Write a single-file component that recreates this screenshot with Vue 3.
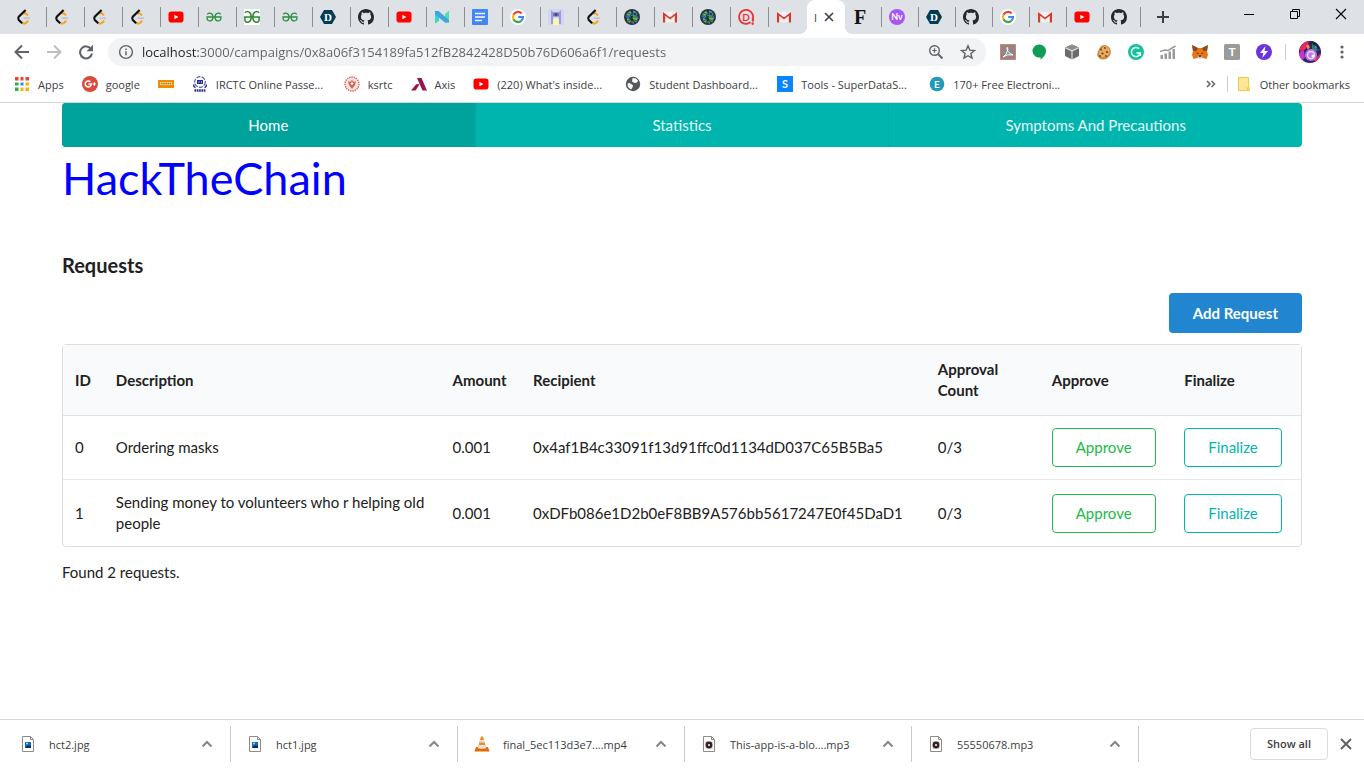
<template>
  <div class="browser">
    <svg class="sprite" aria-hidden="true">
      <symbol id="leetcode" viewBox="0 0 16 16">
        <path d="M7 4.800q2-1.500 3.800.4l1.200 1.200M6.200 13.800q2 1.600 4 0l2-2" fill="none" stroke="#f9a11b" stroke-width="2" />
        <path d="M9.600 1 2.800 7.700q-1.300 1.700 0 3.300l3.400 3.200" fill="none" stroke="#111" stroke-width="2.200" />
        <path d="M7.500 9.200h6.500" stroke="#c4c4c4" stroke-width="1.800" />
      </symbol>
      <symbol id="youtube" viewBox="0 0 16 16">
        <rect x="0.500" y="2.500" width="15" height="11" rx="2.800" fill="#f00" />
        <path d="M6.400 5.700v4.600l4-2.300z" fill="#fff" />
      </symbol>
      <symbol id="gfg" viewBox="0 0 16 16">
        <path d="M1.300 5.300C2.600 3.700 7 3.300 7 8s-4.400 4.500-5.700 2.700L1 8h14l-.3 2.700C13.400 12.500 9 12.700 9 8s4.400-4.300 5.700-2.700" fill="none" stroke="#2f8d46" stroke-width="1.300" />
      </symbol>
      <symbol id="gfg-box" viewBox="0 0 16 16">
        <path d="M0 0h16v16H0z" fill="#fff" />
        <path d="M1 3.800C2.600 1.600 7.200 2.200 7.200 8S2.400 14.400 1 11.800L.8 8h14.400l-.2 3.800C13.600 14.400 8.800 13.800 8.800 8s4.600-6.400 6.200-4.200" fill="none" stroke="#2e8b2e" stroke-width="1.500" />
      </symbol>
      <symbol id="devfolio" viewBox="0 0 16 16">
        <path d="M4 1h8l4 7-4 7H4L0 8z" fill="#053c53" />
      </symbol>
      <symbol id="github" viewBox="0 0 16 16">
        <path fill="#24292e" d="M8 0C3.580 0 0 3.580 0 8c0 3.540 2.290 6.530 5.470 7.590.4.070.55-.17.55-.38 0-.19-.01-.82-.01-1.490-2.010.37-2.530-.49-2.690-.94-.09-.23-.48-.94-.82-1.130-.28-.15-.68-.52-.01-.53.63-.01 1.080.58 1.230.82.72 1.210 1.870.87 2.330.66.07-.52.28-.87.51-1.070-1.780-.2-3.640-.89-3.640-3.950 0-.87.31-1.590.82-2.150-.08-.2-.36-1.020.08-2.120 0 0 .67-.21 2.200.82.64-.18 1.320-.27 2-.27s1.360.09 2 .27c1.530-1.040 2.200-.82 2.200-.82.44 1.100.16 1.920.08 2.120.51.56.82 1.270.82 2.150 0 3.070-1.870 3.750-3.650 3.950.29.25.54.73.54 1.480 0 1.070-.01 1.930-.01 2.200 0 .21.15.46.55.38A8.010 8.010 0 0 0 16 8c0-4.420-3.580-8-8-8z" />
      </symbol>
      <symbol id="nx" viewBox="0 0 16 16">
        <path d="M1 2l4 3v7l-4 2.500z" fill="#35d8c0" />
        <path d="M11 5l4-3.500V13.500h-4z" fill="#4be3a4" />
        <path d="M1 2h3.500L15 11v2.500h-4L1 5.500z" fill="#3fa5e0" />
      </symbol>
      <symbol id="docs" viewBox="0 0 16 16">
        <rect width="16" height="16" rx="1" fill="#4285f4" />
        <path d="M3 4.500h10M3 8h10M3 11.500h7" stroke="#fff" stroke-width="1.600" />
      </symbol>
      <symbol id="google" viewBox="0 0 16 16">
        <circle cx="8" cy="8" r="8" fill="#fff" />
        <g fill="none" stroke-width="2.200">
          <path d="M11.600 4.500A5 5 0 0 0 3.500 5.800" stroke="#ea4335" />
          <path d="M3.500 5.800A5 5 0 0 0 3.500 10.200" stroke="#fbbc05" />
          <path d="M3.500 10.200A5 5 0 0 0 11.400 11.700" stroke="#34a853" />
          <path d="M11.400 11.700A5 5 0 0 0 13 8H8.200" stroke="#4285f4" />
        </g>
      </symbol>
      <symbol id="tower" viewBox="0 0 16 16">
        <path d="M0 0h16v16H0z" fill="#d4d5f5" />
        <path d="M3 1l2 2h6l2-2v14h-2V8H5v7H3z" fill="#9a9ddb" />
        <path d="M5 4h6v3H5z" fill="#7376a6" />
        <circle cx="8" cy="5.500" r="1.200" fill="#3c3f6b" />
        <path d="M5 16v-5q3-4 6 0v5z" fill="#fdf6b0" />
      </symbol>
      <symbol id="earth" viewBox="0 0 16 16">
        <circle cx="8" cy="8" r="8" fill="#2a3540" />
        <path d="M2 5l4-3 2 2-3 3zM8 8l3-2 3 3-2 4-2-1zM3 9l4 2-1 3-3-2zM11 3l3 2-2 1zM7 13l2-1 1 3z" fill="#63b84c" />
        <path d="M9 1.500l3 1 1 2-4-1zM1 7l4-1 2 2-3 2zM7 12l3 1-2 2zM6 5l4-1v3H7zM12 6l3 2-2 2zM12 12l2-1-2 3z" fill="#3a8fd6" />
        <path d="M1 8h14M8 1v14M2.500 4q5.500 3 11 0M2.500 12q5.500-3 11 0" fill="none" stroke="#1b262c" stroke-width=".6" />
      </symbol>
      <symbol id="gmail" viewBox="0 0 16 16">
        <path d="M1.500 2.800h13v10.400h-13z" fill="#f3f1f1" />
        <path d="M1 13.500V3l7 5.600L15 3v10.500h-2.200V6.800L8 10.600 3.200 6.800v6.700z" fill="#d93a2b" />
      </symbol>
      <symbol id="dare" viewBox="0 0 16 16">
        <path d="M12.500 13.300A7 7 0 1 1 15 9" fill="none" stroke="#f0323c" stroke-width="1.800" />
        <path d="M13.800 8.500h2.200v4h-2.200z" fill="#f0323c" />
        <circle cx="14.700" cy="14.600" r="1.300" fill="#f0323c" />
      </symbol>
      <symbol id="nv" viewBox="0 0 16 16">
        <circle cx="8" cy="8" r="8" fill="#a655f7" />
      </symbol>

      <symbol id="apps" viewBox="0 0 16 16">
        <path d="M1 1h4v4H1zM6 1h4v4H6zM11 1h4v4h-4z" fill="#e94335" />
        <path d="M1 6h4v4H1zM1 11h4v4H1z" fill="#34a853" />
        <path d="M6 6h4v4H6z" fill="#2b8cf4" />
        <path d="M11 6h4v4h-4zM6 11h4v4H6zM11 11h4v4h-4z" fill="#f5b400" />
        <path d="M5.500 0v16M10.500 0v16M0 5.500h16M0 10.500h16" stroke="#fff" stroke-width="2" />
      </symbol>
      <symbol id="gplus" viewBox="0 0 16 16">
        <circle cx="8" cy="8" r="8" fill="#d94b3d" />
        <path d="M8.400 5.900A3 3 0 1 0 9.200 8H6.400" fill="none" stroke="#fff" stroke-width="1.500" />
        <path d="M10.500 8h3.600M12.300 6.200v3.600" stroke="#fff" stroke-width="1.200" />
      </symbol>
      <symbol id="ticket" viewBox="0 0 16 16">
        <path d="M0 4h16v8H0z" fill="#f08c00" />
        <path d="M2 6h12v3H2z" fill="#fbd9a0" />
        <path d="M3 7.500h10" stroke="#b06a10" stroke-width="1.500" stroke-dasharray="1.500 .7" />
      </symbol>
      <symbol id="irctc" viewBox="0 0 16 16">
        <circle cx="8" cy="6" r="5.300" fill="#fff" stroke="#5a5eb5" stroke-width="1.200" stroke-dasharray="4 1.200" />
        <path d="M5 4h6v4H5z" fill="#2b2f95" />
        <path d="M2 8.500q-1 2 1.500 3M14 8.500q1 2-1.500 3" fill="none" stroke="#2b2f95" stroke-width="1.500" />
        <path d="M6.500 6h1M9 6h1" stroke="#fff" />
        <path d="M2.500 14.500h11" stroke="#2b2f95" stroke-width="2.500" stroke-dasharray="1.700 .6" />
      </symbol>
      <symbol id="ksrtc" viewBox="0 0 16 16">
        <circle cx="8" cy="8" r="7" fill="#fbe5e3" stroke="#d9605a" stroke-width="1.400" stroke-dasharray="1.400 .9" />
        <path d="M4 5l2 1 2-2 2 2 2-1-1 4-3 4-3-4z" fill="#d9605a" />
        <circle cx="8" cy="7.500" r="1.200" fill="#fff" />
      </symbol>
      <symbol id="axis" viewBox="0 0 16 16">
        <path d="M6 2h4.500l5.500 12.500h-4.500z" fill="#97144d" />
        <path d="M0 14.500 5 8.500q2-1 3.500 0L4.500 14.500z" fill="#97144d" />
      </symbol>
      <symbol id="globe" viewBox="0 0 16 16">
        <circle cx="8" cy="8" r="7.200" fill="#55595e" />
        <path d="M2.500 7.500q2-1 3.500.5t2 1l-.5 2.500L6 13.500 3 11z" fill="#fff" />
        <path d="M7.500 2.200h3l2.500 2.300-1 2-2.500.5L7 5.500z" fill="#fff" />
      </symbol>
      <symbol id="letter-s" viewBox="0 0 16 16">
        <path d="M0 0h16v16H0z" fill="#0a84ff" />
      </symbol>
      <symbol id="letter-e" viewBox="0 0 16 16">
        <circle cx="8" cy="8" r="7.300" fill="#1f9bb8" />
      </symbol>
      <symbol id="folder" viewBox="0 0 16 16">
        <path d="M2.500 1.500h10v9l1 4h-11z" fill="#ffe694" stroke="#edc94c" />
        <path d="M11.500 14.500q-1-3.500 1.500-4v4z" fill="#ffe694" stroke="#edc94c" />
      </symbol>

      <symbol id="acrobat" viewBox="0 0 16 16">
        <path d="M.5.5h15v15H.500z" fill="#8d8787" stroke="#e07c6c" />
        <path d="M3 13q4-2 4.800-7.500.2-2.500-.8-2 -.5 4.500 6 7.500-5.500-1.500-10 2" fill="none" stroke="#fff" stroke-width="1" />
      </symbol>
      <symbol id="hangouts" viewBox="0 0 16 16">
        <path d="M7.500.5a6.500 6.500 0 0 1 6.500 6.500c0 4-3 6.500-5.500 8.500v-2.200A6.500 6.500 0 1 1 7.500.5z" fill="#0f9d58" />
      </symbol>
      <symbol id="cube" viewBox="0 0 16 16">
        <path d="M8 .5l7 3v8.500L8 15.500l-7-3.500V3.500z" fill="#6b6b6b" />
        <path d="M8 .5l7 3L8 7 1 3.500z" fill="#8e8e8e" />
        <path d="M1.500 3.800 8 7l6.500-3.200M8 7v8" fill="none" stroke="#e2e2e2" stroke-width="1.200" />
      </symbol>
      <symbol id="cookie" viewBox="0 0 16 16">
        <path d="M8 1q4 0 6 3.500 2 4-.5 7.500T7 15.500 1 11l1-4 3-5z" fill="#d08a3c" />
        <path d="M8 2q5 0 5.500 5T8 13 3 8z" fill="#e6ac62" />
        <g fill="#70401c"><circle cx="5" cy="5.500" r="1" /><circle cx="9" cy="4" r=".9" /><circle cx="11" cy="8" r="1.100" /><circle cx="6.500" cy="9.500" r="1.100" /><circle cx="4" cy="12" r=".9" /><circle cx="10" cy="12" r=".9" /></g>
      </symbol>
      <symbol id="grammarly" viewBox="0 0 16 16">
        <circle cx="8" cy="8" r="8" fill="#15c39a" />
        <path d="M11 4.800A4.500 4.500 0 1 0 12.300 9H8.500M12.400 9v3" fill="none" stroke="#fff" stroke-width="1.500" />
      </symbol>
      <symbol id="stats" viewBox="0 0 16 16">
        <path d="M.5 11h2.500v4H.500zM4.500 9.500h2.500V15H4.500zM8.500 7.500H11V15H8.500zM12.500 5H15V15h-2.500z" fill="#9a9a9a" />
        <path d="M0 7.500l5-1.500 3 .5L15.500 2" fill="none" stroke="#9a9a9a" stroke-width="1.500" />
      </symbol>
      <symbol id="metamask" viewBox="0 0 16 16">
        <path d="M0 1l6 3h4l6-3-1 6 1 4-1.500 4-4-1H5.500l-4 1L0 11l1-4z" fill="#e4761b" />
        <path d="M0 1l6 3-1.500 3L1 7zM16 1l-6 3 1.500 3L15 7z" fill="#8f4a1e" />
        <path d="M6 12h4l.5 2.500h-5z" fill="#d7c1b3" />
        <path d="M4 8.500l2.500.5v1.200zM12 8.500 9.500 9v1.200zM6.800 11.500h2.400v1.300H6.800z" fill="#2b2622" />
      </symbol>
      <symbol id="type-t" viewBox="0 0 16 16">
        <rect width="16" height="16" rx="1.500" fill="#9b9b9b" />
      </symbol>
      <symbol id="bolt" viewBox="0 0 16 16">
        <circle cx="8" cy="8" r="8" fill="#6a35e0" />
        <path d="M9.500 2 4 9h3.300l-1 5L12 7H8.500z" fill="#fff" />
      </symbol>
      <symbol id="avatar" viewBox="0 0 22 22">
        <circle cx="11" cy="11" r="11" fill="#35206b" />
        <path d="M1 7q3-6 9-7l-3 8-6 3z" fill="#e8265f" />
        <path d="M12 0q6 1 8 6l-6 1z" fill="#142a3c" />
        <path d="M13 2l4 6 4 1-8 2z" fill="#2f7f63" />
        <path d="M0 12l5-3 1 8-3 2q-3-3-3-7z" fill="#c535c9" />
        <path d="M15 19l6-6q1 4-5 8z" fill="#e23b48" />
        <path d="M9 3l2 3-2 3-2-4z" fill="#f08a3a" />
        <path d="M15 4l3 2-1 3z" fill="#36a0d8" />
        <circle cx="12" cy="14" r="6" fill="#b878f0" />
        <circle cx="12" cy="14" r="3.500" fill="none" stroke="#efd8ff" stroke-width="1.300" />
        <circle cx="14" cy="15" r="1.500" fill="#fff" />
      </symbol>

      <symbol id="back" viewBox="0 0 16 16">
        <path d="M15 8H2M8 1.500 1.500 8 8 14.500" fill="none" stroke="currentColor" stroke-width="2" />
      </symbol>
      <symbol id="forward" viewBox="0 0 16 16">
        <path d="M1 8h13M8 1.500 14.500 8 8 14.500" fill="none" stroke="currentColor" stroke-width="2" />
      </symbol>
      <symbol id="reload" viewBox="0 0 16 16">
        <path d="M13.200 5.200A6 6 0 1 0 14 9.500" fill="none" stroke="currentColor" stroke-width="2" />
        <path d="M15 .8v6.500H8.500z" fill="currentColor" />
      </symbol>
      <symbol id="info" viewBox="0 0 16 16">
        <circle cx="8" cy="8" r="6.400" fill="none" stroke="currentColor" stroke-width="1.400" />
        <path d="M8 7.200v4M8 4.500v1.500" stroke="currentColor" stroke-width="1.500" />
      </symbol>
      <symbol id="zoom" viewBox="0 0 16 16">
        <circle cx="6.500" cy="6.500" r="4.800" fill="none" stroke="currentColor" stroke-width="1.400" />
        <path d="M10 10l4.500 4.500" stroke="currentColor" stroke-width="2" />
        <path d="M4.300 6.500h4.400M6.500 4.300v4.400" stroke="currentColor" stroke-width="1.200" />
      </symbol>
      <symbol id="star" viewBox="0 0 16 16">
        <path d="M8 1.800l1.800 4.300 4.700.4-3.600 3 1.100 4.600L8 11.700l-4 2.400 1.100-4.600-3.600-3 4.700-.4z" fill="none" stroke="currentColor" stroke-width="1.400" />
      </symbol>
      <symbol id="dots" viewBox="0 0 16 16">
        <g fill="currentColor"><circle cx="8" cy="3" r="1.600" /><circle cx="8" cy="8" r="1.600" /><circle cx="8" cy="13" r="1.600" /></g>
      </symbol>
      <symbol id="plus" viewBox="0 0 16 16">
        <path d="M8 2v12M2 8h12" stroke="currentColor" stroke-width="2" />
      </symbol>
      <symbol id="cross" viewBox="0 0 16 16">
        <path d="M4 4l8 8M12 4l-8 8" stroke="currentColor" stroke-width="1.600" />
      </symbol>
      <symbol id="cross-large" viewBox="0 0 16 16">
        <path d="M3 3l10 10M13 3 3 13" stroke="currentColor" stroke-width="2" />
      </symbol>
      <symbol id="minimize" viewBox="0 0 16 16">
        <path d="M3 8.500h10" stroke="#000" />
      </symbol>
      <symbol id="restore" viewBox="0 0 16 16">
        <path d="M3.500 5.500h7v7h-7zM5.500 5.500v-2h7v7h-2" fill="none" stroke="#000" />
      </symbol>
      <symbol id="close" viewBox="0 0 16 16">
        <path d="M3 3l10 10M13 3 3 13" stroke="#000" stroke-width="1.100" />
      </symbol>
      <symbol id="more" viewBox="0 0 16 16">
        <path d="M4 5l3 3-3 3M8.500 5l3 3-3 3" fill="none" stroke="currentColor" stroke-width="1.500" />
      </symbol>
      <symbol id="chevron" viewBox="0 0 16 16">
        <path d="M3.500 10.500 8 6l4.500 4.500" fill="none" stroke="#80868b" stroke-width="2" />
      </symbol>
      <symbol id="file-image" viewBox="0 0 16 16">
        <path d="M2.500.5h8l3 3v12h-11zM10.500.5v3h3" fill="#fff" stroke="#8c8c8c" />
        <path d="M5 6h6v6H5z" fill="#1668b8" />
        <path d="M5 12l3-3 1.500 1L11 9v3z" fill="#0c2f63" />
        <circle cx="7" cy="7.500" r="1" fill="#9fe0ff" />
      </symbol>
      <symbol id="file-audio" viewBox="0 0 16 16">
        <path d="M2.500.5h8l3 3v12h-11zM10.500.5v3h3" fill="#fff" stroke="#8c8c8c" />
        <path d="M4.500 5.500h7v7h-7z" fill="#f0a884" />
        <circle cx="8" cy="9" r="3.400" fill="#2d2335" />
        <circle cx="8" cy="9" r="1" fill="#fff" />
      </symbol>
      <symbol id="vlc" viewBox="0 0 16 16">
        <path d="M2 11h12l1.500 4.500H.5z" fill="#e66a00" />
        <path d="M7 .5h2L12.500 13h-9z" fill="#f08a1d" />
        <path d="M6 4h4l.8 2.600H5.200zM4.600 9h6.800l.8 3q-4.200 1.500-8.400 0z" fill="#dfe3e6" />
      </symbol>
    </svg>

    <header class="chrome">
      <div class="tab-strip">
        <div class="tabs">
          <button v-for="(tab, i) in leftTabs" :key="'l' + i" class="tab" :aria-label="tab">
            <AppIcon :name="tab" />
            <span v-if="i < leftTabs.length - 1" class="tab-line"></span>
          </button>
          <div class="tab tab-active">
            <span class="tab-title">I</span>
            <button class="tab-close" aria-label="Close tab">
              <AppIcon name="cross" />
            </button>
          </div>
          <button v-for="(tab, i) in rightTabs" :key="'r' + i" class="tab tab-narrow" :aria-label="tab">
            <AppIcon :name="tab" />
            <span class="tab-line"></span>
          </button>
          <button class="new-tab" aria-label="New tab">
            <AppIcon name="plus" />
          </button>
        </div>
        <div class="window-controls">
          <button v-for="control in windowControls" :key="control" class="window-btn" :aria-label="control">
            <AppIcon :name="control" />
          </button>
        </div>
      </div>

      <div class="toolbar">
        <button class="icon-btn" aria-label="Back"><AppIcon name="back" /></button>
        <button class="icon-btn icon-btn-off" aria-label="Forward"><AppIcon name="forward" /></button>
        <button class="icon-btn" aria-label="Reload"><AppIcon name="reload" /></button>
        <div class="omnibox">
          <AppIcon name="info" />
          <input v-model="address" class="address" type="text" aria-label="Address" spellcheck="false" />
          <button class="icon-btn" aria-label="Zoom"><AppIcon name="zoom" /></button>
          <button class="icon-btn" aria-label="Bookmark"><AppIcon name="star" /></button>
        </div>
        <div class="toolbar-end">
          <div class="extensions">
            <button v-for="ext in extensions" :key="ext" class="icon-btn" :aria-label="ext">
              <AppIcon :name="ext" />
            </button>
          </div>
          <span class="toolbar-line"></span>
          <button class="icon-btn" aria-label="Profile"><svg class="avatar"><use href="#avatar" /></svg></button>
          <button class="icon-btn" aria-label="Menu"><AppIcon name="dots" /></button>
        </div>
      </div>

      <nav class="bookmarks">
        <a v-for="mark in bookmarks" :key="mark.icon" href="#" class="bookmark" :aria-label="mark.label || mark.icon">
          <AppIcon :name="mark.icon" />
          <span v-if="mark.label" :class="{ 'bookmark-long': mark.label.endsWith('...') }">{{ mark.label }}</span>
        </a>
        <div class="bookmarks-end">
          <button class="icon-btn" aria-label="More bookmarks"><AppIcon name="more" /></button>
          <span class="toolbar-line"></span>
          <a href="#" class="bookmark">
            <AppIcon name="folder" />
            <span>Other bookmarks</span>
          </a>
        </div>
      </nav>
    </header>

    <main class="page">
      <nav class="menu">
        <a v-for="item in menu" :key="item" href="#" class="menu-item" :class="{ active: item === activeItem }"
          @click.prevent="activeItem = item">{{ item }}</a>
      </nav>

      <h1 class="brand"><a href="#">HackTheChain</a></h1>
      <h3 class="title">Requests</h3>

      <div class="actions">
        <button class="btn btn-primary">Add Request</button>
      </div>

      <table class="requests">
        <colgroup>
          <col class="col-id" />
          <col class="col-description" />
          <col class="col-amount" />
          <col class="col-recipient" />
          <col class="col-count" />
          <col class="col-approve" />
          <col class="col-finalize" />
        </colgroup>
        <thead>
          <tr>
            <th v-for="head in heads" :key="head">{{ head }}</th>
          </tr>
        </thead>
        <tbody>
          <tr v-for="request in requests" :key="request.id">
            <td>{{ request.id }}</td>
            <td>{{ request.description }}</td>
            <td>{{ request.amount }}</td>
            <td>{{ request.recipient }}</td>
            <td>{{ request.approvals }}/{{ approversCount }}</td>
            <td><button class="btn btn-approve">Approve</button></td>
            <td><button class="btn btn-finalize">Finalize</button></td>
          </tr>
        </tbody>
      </table>

      <p class="found">Found {{ requests.length }} requests.</p>
    </main>

    <footer class="downloads">
      <div v-for="file in downloads" :key="file.name" class="download">
        <AppIcon :name="file.icon" />
        <span class="download-name">{{ file.name }}</span>
        <button class="icon-btn" :aria-label="'Options for ' + file.name">
          <AppIcon name="chevron" />
        </button>
      </div>
      <div class="downloads-end">
        <button class="show-all">Show all</button>
        <button class="icon-btn" aria-label="Close downloads bar">
          <AppIcon name="cross-large" />
        </button>
      </div>
    </footer>
  </div>
</template>

<script setup>
import { h, ref } from 'vue'

// letters that sit on top of an icon's shape
const sans = 'Lato, sans-serif'
const serif = 'Liberation Serif, serif'
const letters = {
  devfolio: { text: 'D', size: 11, y: 12, family: serif, fill: '#fff' },
  dare: { text: 'D', size: 10, y: 12, family: sans, fill: '#f0323c' },
  'letter-f': { text: 'F', size: 20, y: 15, family: serif, fill: '#111' },
  nv: { text: 'Nv', size: 9, y: 11, family: sans, fill: '#fff' },
  'letter-s': { text: 'S', size: 11, y: 12, family: sans, fill: '#fff' },
  'letter-e': { text: 'E', size: 10, y: 12, family: sans, fill: '#fff' },
  'type-t': { text: 'T', size: 12, y: 12, family: sans, fill: '#fff' }
}

const AppIcon = ({ name }) => {
  const letter = letters[name]
  return h('svg', { class: 'icon', viewBox: '0 0 16 16' }, [
    h('use', { href: '#' + name }),
    letter && h('text', {
      x: 8,
      y: letter.y,
      fill: letter.fill,
      'text-anchor': 'middle',
      'font-family': letter.family,
      'font-size': letter.size,
      'font-weight': 700
    }, letter.text)
  ])
}
AppIcon.props = ['name']

const leftTabs = [
  'leetcode', 'leetcode', 'leetcode', 'leetcode', 'youtube', 'gfg', 'gfg-box',
  'gfg', 'devfolio', 'github', 'youtube', 'nx', 'docs', 'google', 'tower',
  'leetcode', 'earth', 'gmail', 'earth', 'dare', 'gmail'
]
const rightTabs = ['letter-f', 'nv', 'devfolio', 'github', 'google', 'gmail', 'youtube', 'github']
const windowControls = ['minimize', 'restore', 'close']
const extensions = ['acrobat', 'hangouts', 'cube', 'cookie', 'grammarly', 'stats', 'metamask', 'type-t', 'bolt']

const address = ref('localhost:3000/campaigns/0x8a06f3154189fa512fB2842428D50b76D606a6f1/requests')

const bookmarks = [
  { icon: 'apps', label: 'Apps' },
  { icon: 'gplus', label: 'google' },
  { icon: 'ticket', label: '' },
  { icon: 'irctc', label: 'IRCTC Online Passe...' },
  { icon: 'ksrtc', label: 'ksrtc' },
  { icon: 'axis', label: 'Axis' },
  { icon: 'youtube', label: "(220) What's inside..." },
  { icon: 'globe', label: 'Student Dashboard...' },
  { icon: 'letter-s', label: 'Tools - SuperDataS...' },
  { icon: 'letter-e', label: '170+ Free Electroni...' }
]

const menu = ['Home', 'Statistics', 'Symptoms And Precautions']
const activeItem = ref('Home')

const heads = ['ID', 'Description', 'Amount', 'Recipient', 'Approval Count', 'Approve', 'Finalize']
const approversCount = 3
const requests = [
  {
    id: 0,
    description: 'Ordering masks',
    amount: '0.001',
    recipient: '0x4af1B4c33091f13d91ffc0d1134dD037C65B5Ba5',
    approvals: 0
  },
  {
    id: 1,
    description: 'Sending money to volunteers who r helping old people',
    amount: '0.001',
    recipient: '0xDFb086e1D2b0eF8BB9A576bb5617247E0f45DaD1',
    approvals: 0
  }
]

const downloads = [
  { icon: 'file-image', name: 'hct2.jpg' },
  { icon: 'file-image', name: 'hct1.jpg' },
  { icon: 'vlc', name: 'final_5ec113d3e7....mp4' },
  { icon: 'file-audio', name: 'This-app-is-a-blo....mp3' },
  { icon: 'file-audio', name: '55550678.mp3' }
]
</script>

<style>
body {
  margin: 0;
  background: #fff;
}
</style>

<style scoped>
* {
  box-sizing: border-box;
}

button {
  border: none;
  background: none;
  padding: 0;
  font-family: inherit;
  cursor: pointer;
}

a {
  color: inherit;
  text-decoration: none;
}

.browser {
  display: flex;
  flex-direction: column;
  min-height: 100vh;
  font-family: "Open Sans", "Noto Sans", sans-serif;
  font-size: 11px;
  color: #3c4043;
}

.sprite {
  position: absolute;
  width: 0;
  height: 0;
}

.icon {
  display: block;
  flex: none;
  width: 16px;
  height: 16px;
}

.icon-btn {
  display: flex;
  flex: none;
  color: #5f6368;
}

.icon-btn-off {
  color: #bdbfc2;
}

/* tabs */
.chrome {
  border-bottom: 1px solid #d6d7d9;
}

.tab-strip {
  display: flex;
  justify-content: space-between;
  height: 34px;
  background: #dee1e6;
}

.tabs {
  display: flex;
  padding-left: 9px;
  min-width: 0;
}

.tab {
  display: flex;
  align-items: center;
  justify-content: space-between;
  width: 38px;
  padding-left: 7px;
}

.tab-narrow {
  width: 37px;
}

.tab-line {
  width: 1px;
  height: 20px;
  background: #8b8e93;
}

.tab-active {
  position: relative;
  padding: 0 8px 0 7px;
  background: #fff;
  border-radius: 8px 8px 0 0;
}

.tab-active::before,
.tab-active::after {
  content: "";
  position: absolute;
  bottom: 0;
  width: 8px;
  height: 8px;
}

.tab-active::before {
  right: 100%;
  background: radial-gradient(circle at 0 0, transparent 8px, #fff 8px);
}

.tab-active::after {
  left: 100%;
  background: radial-gradient(circle at 100% 0, transparent 8px, #fff 8px);
}

.tab-close {
  color: #3c4043;
}

.new-tab {
  padding: 0 14px;
  color: #3c4043;
}

.window-controls {
  display: flex;
}

.window-btn {
  display: flex;
  align-items: center;
  justify-content: center;
  width: 46px;
  height: 28px;
}

/* toolbar */
.toolbar {
  display: flex;
  align-items: center;
  gap: 16px;
  height: 36px;
  padding: 0 14px;
}

.omnibox {
  display: flex;
  flex: 1;
  align-items: center;
  gap: 16px;
  height: 28px;
  margin: 0 -2px;
  padding: 0 10px;
  border-radius: 14px;
  background: #f1f3f4;
  color: #5f6368;
}

.address {
  flex: 1;
  min-width: 0;
  margin-left: -8px;
  padding: 0;
  border: none;
  outline: none;
  font-family: inherit;
  font-size: 13px;
  color: #5f6368;
  background: linear-gradient(90deg, #202124 56px, #5f6368 56px);
  background-clip: text;
  -webkit-text-fill-color: transparent;
}

.toolbar-end {
  display: flex;
  align-items: center;
  gap: 13px;
}

.extensions {
  display: flex;
  gap: 16px;
}

.toolbar-line {
  width: 1px;
  height: 16px;
  background: #c8cacd;
}

.avatar {
  display: block;
  width: 22px;
  height: 22px;
}

/* bookmarks */
.bookmarks {
  display: flex;
  align-items: center;
  gap: 18px;
  height: 32px;
  padding: 0 14px 4px;
  white-space: nowrap;
}

.bookmark {
  display: flex;
  align-items: center;
  gap: 8px;
}

.bookmark-long {
  min-width: 110px;
}

.bookmarks-end {
  display: flex;
  align-items: center;
  gap: 8px;
  margin-left: auto;
}

/* page */
.page {
  flex: 1;
  width: 100%;
  max-width: 1240px;
  margin: 0 auto;
  font-family: Lato, sans-serif;
  font-size: 15px;
  line-height: 21px;
  color: #212121;
}

.menu {
  display: flex;
  border-radius: 4px;
  overflow: hidden;
  background: #00b5ad;
}

.menu-item {
  flex: 1;
  padding: 12px 16px 11px;
  border-right: 1px solid #00a9a2;
  text-align: center;
  color: #e6f8f7;
}

.menu-item:last-child {
  border-right: none;
}

.menu-item.active {
  background: #00a39c;
  color: #fff;
}

.brand {
  margin: 3px 0 0;
  font-size: 45px;
  font-weight: 400;
  line-height: 56px;
  color: #0000ff;
}

.title {
  margin: 45px 0 14px;
  font-size: 20px;
  font-weight: 700;
  line-height: 28px;
}

.actions {
  display: flex;
  justify-content: flex-end;
  margin-bottom: 11px;
}

.btn {
  padding: 0 23px;
  border: 1px solid transparent;
  border-radius: 4px;
  font-size: 15px;
  line-height: 37px;
}

.btn-primary {
  background: #2185d0;
  color: #fff;
  font-weight: 700;
  line-height: 38px;
}

.btn-approve {
  border-color: #21ba45;
  color: #21ba45;
}

.btn-finalize {
  border-color: #00b5ad;
  color: #00b5ad;
}

.requests {
  width: 100%;
  table-layout: fixed;
  border: 1px solid #dededf;
  border-radius: 4px;
  border-spacing: 0;
}

.requests th,
.requests td {
  padding: 12px;
  text-align: left;
  vertical-align: middle;
}

.requests th {
  padding: 14px 12px;
  background: #f9fafb;
  border-bottom: 1px solid #e1e2e3;
  font-weight: 700;
}

.requests td {
  border-bottom: 1px solid #e8e8e9;
}

.requests tr:last-child td {
  border-bottom: none;
}

.requests .btn {
  display: block;
}

.col-id { width: 3.3%; }
.col-description { width: 27.2%; }
.col-amount { width: 6.5%; }
.col-recipient { width: 32.7%; }
.col-count { width: 9.2%; }
.col-approve { width: 10.7%; }
.col-finalize { width: 10.4%; }

.found {
  margin: 15px 0;
}

/* downloads */
.downloads {
  display: flex;
  align-items: center;
  height: 49px;
  padding-left: 4px;
  border-top: 1px solid #d6d7d9;
}

.download {
  display: flex;
  align-items: center;
  gap: 13px;
  width: 227px;
  height: 36px;
  padding: 0 15px 0 16px;
  border-right: 1px solid #c8cacd;
}

.download-name {
  flex: 1;
  white-space: nowrap;
}

.downloads-end {
  display: flex;
  align-items: center;
  gap: 10px;
  margin-left: auto;
  padding-right: 10px;
}

.show-all {
  padding: 0 16px;
  border: 1px solid #dadce0;
  border-radius: 4px;
  font-size: 11px;
  font-weight: 600;
  line-height: 30px;
  color: #3c4043;
}
</style>
